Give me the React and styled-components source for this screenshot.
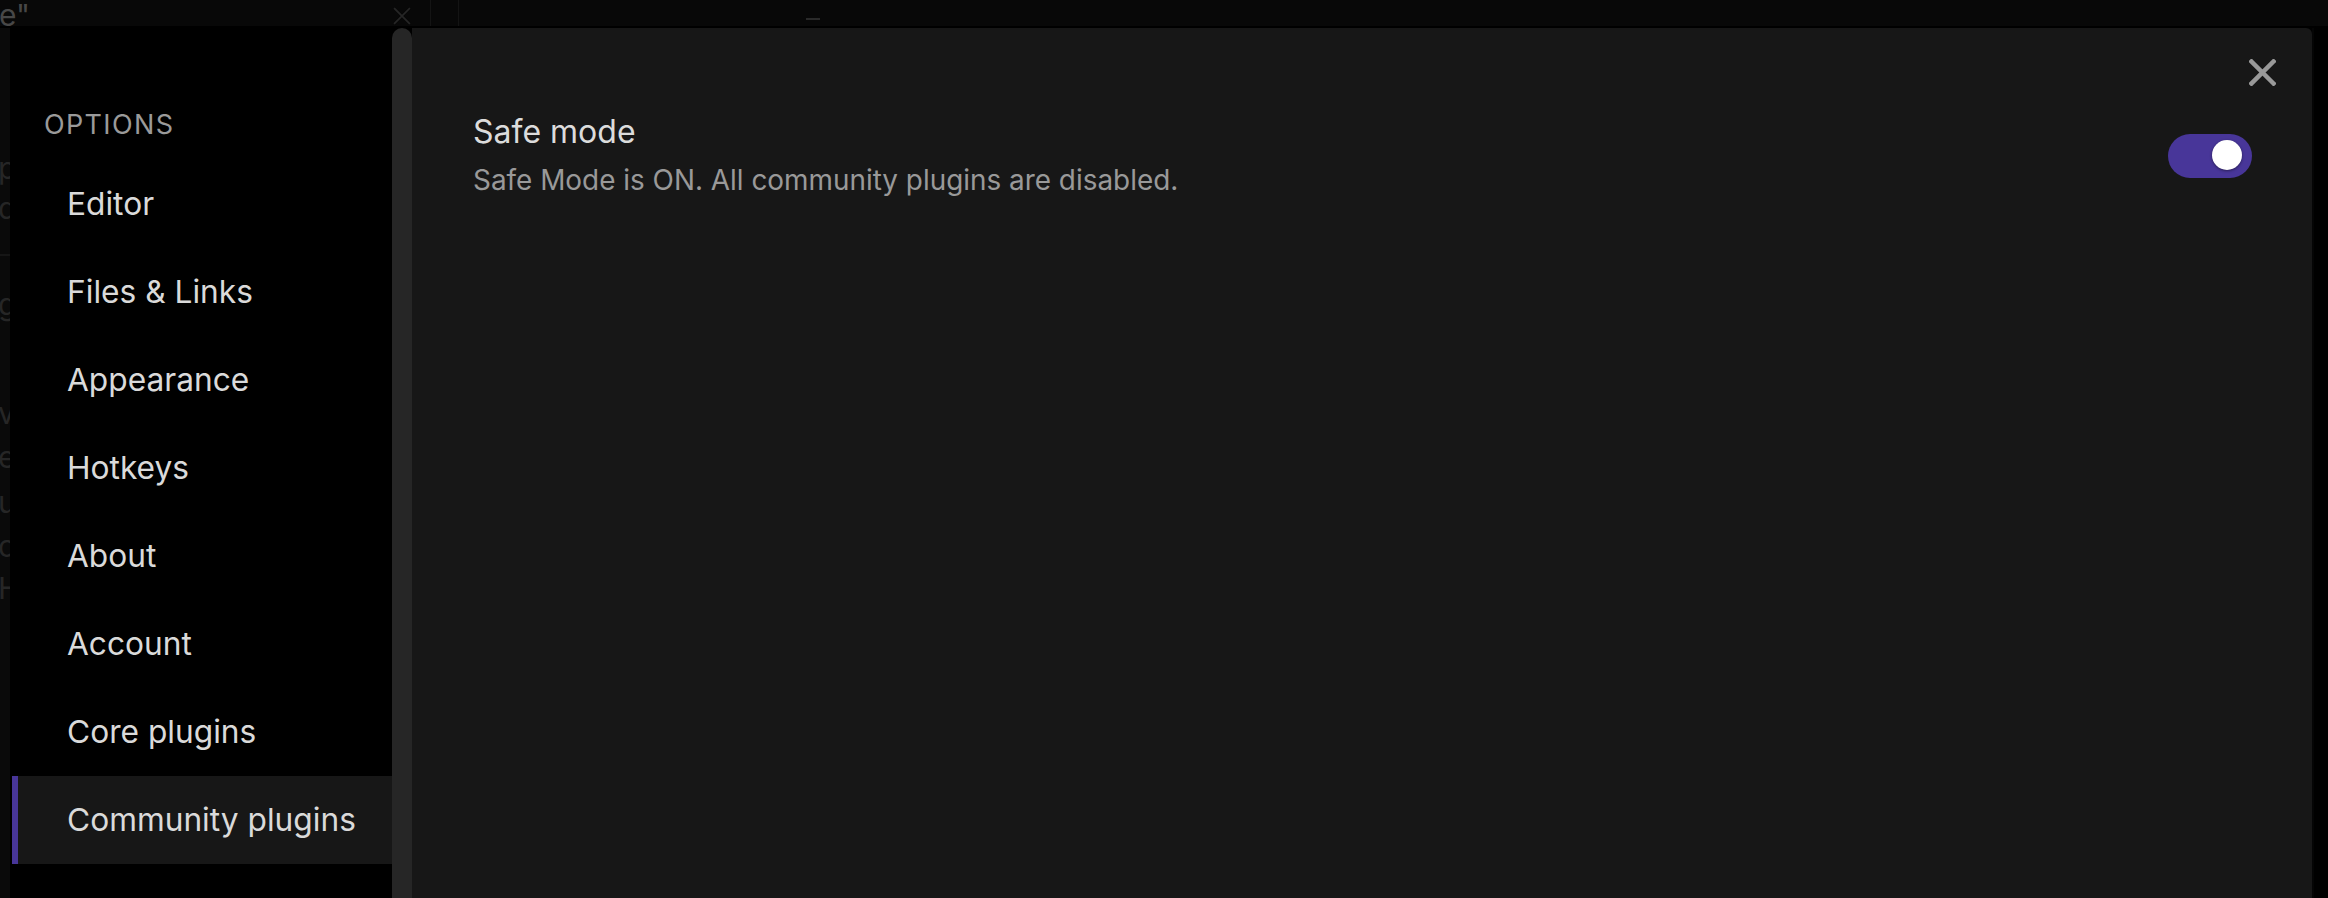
import React from "react";
import styled, { createGlobalStyle } from "styled-components";

const GlobalStyle = createGlobalStyle`
  html, body {
    margin: 0;
    padding: 0;
    background: #000000;
    overflow: hidden;
  }
  body {
    font-family: Inter, "Noto Sans", sans-serif;
    -webkit-font-smoothing: antialiased;
  }
`;

const Page = styled.div`
  width: 2328px;
  height: 898px;
  display: flex;
  flex-direction: column;
  background: #000000;
  overflow: hidden;
`;

const TopBar = styled.div`
  height: 26px;
  flex: 0 0 26px;
  display: flex;
  align-items: stretch;
  background: #080808;
  border-bottom: 2px solid #000000;
  overflow: hidden;
`;

const TabTitle = styled.div`
  width: 30px;
  display: flex;
  justify-content: flex-end;
  overflow: hidden;
  white-space: nowrap;
  font-size: 30px;
  line-height: 30px;
  color: #474747;
`;

const TabSpacer = styled.div`
  width: ${(p) => p.$w}px;
  flex: 0 0 auto;
`;

const TabClose = styled.div`
  width: 20px;
  display: flex;
  align-items: flex-end;
  justify-content: center;
  padding-bottom: 1px;
`;

const TabDivider = styled.div`
  width: 1px;
  background: #141414;
`;

const TabDash = styled.div`
  width: 14px;
  height: 2px;
  margin-top: 18px;
  background: #2a2a2a;
`;

const Body = styled.div`
  flex: 1;
  display: flex;
  min-height: 0;
`;

const Backdrop = styled.div`
  width: 10px;
  flex: 0 0 10px;
  background: #0a0a0a;
  overflow: hidden;
  padding-top: 120px;
  box-sizing: border-box;
`;

const GhostLine = styled.div`
  height: 40px;
  margin-top: ${(p) => p.$gap}px;
  font-size: 30px;
  line-height: 40px;
  text-indent: -2px;
  color: #262626;
  white-space: nowrap;
`;

const GhostRule = styled.div`
  height: 2px;
  margin-top: ${(p) => p.$gap}px;
  background: #161616;
`;

const Modal = styled.div`
  flex: 1;
  display: flex;
  position: relative;
  min-width: 0;
`;

const Sidebar = styled.nav`
  width: 382px;
  flex: 0 0 382px;
  background: #000000;
  padding: 75px 0 0 2px;
  box-sizing: border-box;
`;

const GroupTitle = styled.div`
  font-size: 27px;
  line-height: 44px;
  letter-spacing: 0.05em;
  text-transform: uppercase;
  color: #9a9a9a;
  padding-left: 32px;
  margin-bottom: 13px;
`;

const NavItem = styled.div`
  height: 88px;
  line-height: 88px;
  font-size: 31.7px;
  color: #dadada;
  padding-left: 49px;
  border-left: 6px solid ${(p) => (p.$active ? "#483699" : "transparent")};
  background: ${(p) => (p.$active ? "#171717" : "transparent")};
  white-space: nowrap;
`;

const ScrollThumb = styled.div`
  width: 20px;
  flex: 0 0 20px;
  background: #262626;
  border-radius: 10px 10px 0 0;
`;

const Content = styled.section`
  flex: 1;
  background: #171717;
  border-top-right-radius: 6px;
  padding: 84px 60px 0 61px;
  box-sizing: border-box;
`;

const RightGutter = styled.div`
  width: 16px;
  flex: 0 0 16px;
  background: #000000;
  border-left: 2px solid #050505;
  box-sizing: border-box;
`;

const SettingItem = styled.div`
  display: flex;
  align-items: center;
  justify-content: space-between;
`;

const SettingInfo = styled.div`
  display: flex;
  flex-direction: column;
  gap: 8px;
`;

const SettingName = styled.div`
  font-size: 32px;
  line-height: 40px;
  color: #dcdcdc;
`;

const SettingDesc = styled.div`
  font-size: 27.9px;
  line-height: 40px;
  color: #999999;
`;

const Toggle = styled.div`
  width: 84px;
  height: 44px;
  border-radius: 22px;
  background: ${(p) => (p.$on ? "#483699" : "#3a3a3a")};
  display: flex;
  align-items: center;
  justify-content: ${(p) => (p.$on ? "flex-end" : "flex-start")};
  padding: 0 10px 2px 8px;
  box-sizing: border-box;
`;

const Knob = styled.div`
  width: 30px;
  height: 30px;
  border-radius: 50%;
  background: #ffffff;
  box-shadow: 0 1px 3px rgba(0, 0, 0, 0.45);
`;

const CloseButton = styled.button`
  position: absolute;
  top: 31px;
  right: 36px;
  width: 27px;
  height: 27px;
  padding: 0;
  border: 0;
  background: transparent;
  display: flex;
  cursor: pointer;
`;

const XIcon = ({ size, color, stroke }) => (
  <svg width={size} height={size} viewBox="0 0 27 27">
    <path
      d="M2.5 2.5 L24.5 24.5 M24.5 2.5 L2.5 24.5"
      stroke={color}
      strokeWidth={stroke}
      strokeLinecap="square"
      fill="none"
    />
  </svg>
);

// letters of the note behind the modal, cut by its left edge
const ghost = [
  { t: "p", gap: 0 },
  { t: "d", gap: 0 },
  { rule: true, gap: 26 },
  { t: "g", gap: 28 },
  { t: "v", gap: 69 },
  { t: "e", gap: 4 },
  { t: "u", gap: 5 },
  { t: "c", gap: 4 },
  { t: "H", gap: 2 },
];

const menu = [
  "Editor",
  "Files & Links",
  "Appearance",
  "Hotkeys",
  "About",
  "Account",
  "Core plugins",
  "Community plugins",
];

const App = () => {
  const active = 7;

  return (
    <Page>
      <GlobalStyle />
      <TopBar>
        <TabTitle>
          <span>e"</span>
        </TabTitle>
        <TabSpacer $w={362} />
        <TabClose>
          <XIcon size={18} color="#262626" stroke={2.5} />
        </TabClose>
        <TabSpacer $w={18} />
        <TabDivider />
        <TabSpacer $w={27} />
        <TabDivider />
        <TabSpacer $w={347} />
        <TabDash />
      </TopBar>
      <Body>
        <Backdrop>
          {ghost.map((g, i) =>
            g.rule ? (
              <GhostRule key={i} $gap={g.gap} />
            ) : (
              <GhostLine key={i} $gap={g.gap}>
                {g.t}
              </GhostLine>
            )
          )}
        </Backdrop>
        <Modal>
          <Sidebar>
            <GroupTitle>Options</GroupTitle>
            {menu.map((item, index) => (
              <NavItem key={index} $active={index === active}>
                {item}
              </NavItem>
            ))}
          </Sidebar>
          <ScrollThumb />
          <Content>
            <SettingItem>
              <SettingInfo>
                <SettingName>Safe mode</SettingName>
                <SettingDesc>
                  Safe Mode is ON. All community plugins are disabled.
                </SettingDesc>
              </SettingInfo>
              <Toggle $on>
                <Knob />
              </Toggle>
            </SettingItem>
          </Content>
          <CloseButton aria-label="Close">
            <XIcon size={27} color="#999999" stroke={4.5} />
          </CloseButton>
        </Modal>
        <RightGutter />
      </Body>
    </Page>
  );
};

export default App;
